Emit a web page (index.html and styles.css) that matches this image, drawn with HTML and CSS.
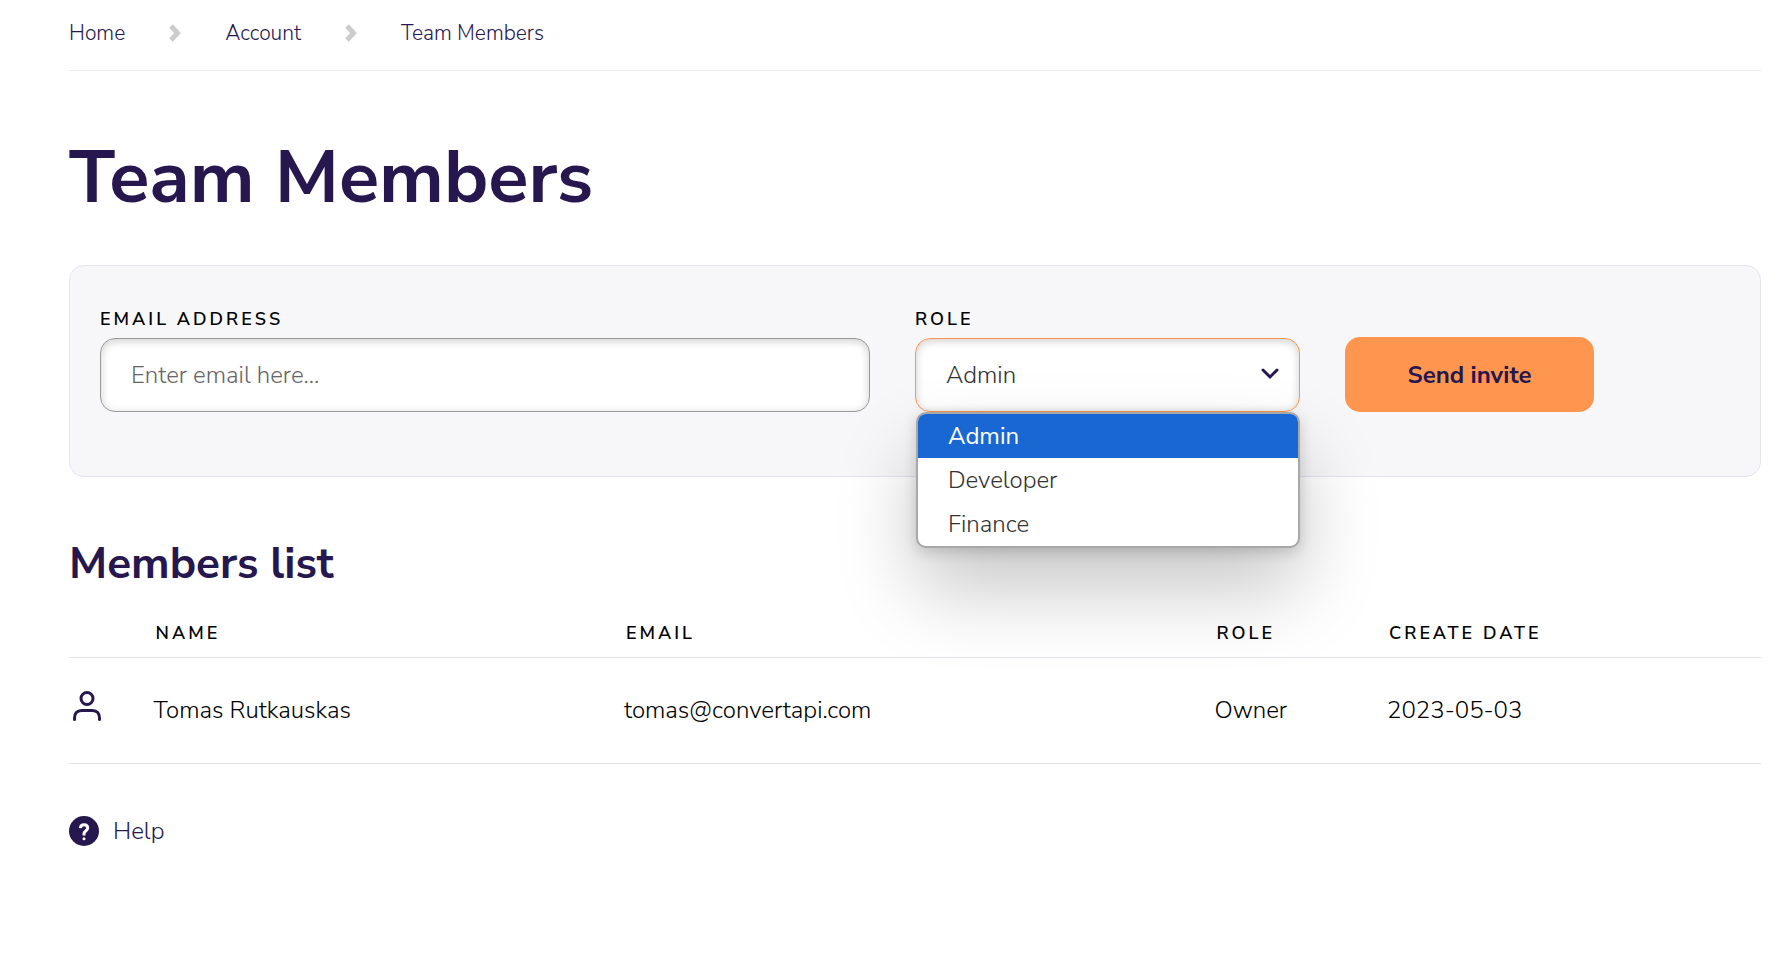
FILE: index.html
```html
<!DOCTYPE html>
<html lang="en">
<head>
  <meta charset="UTF-8">
  <meta name="viewport" content="width=device-width, initial-scale=1.0">
  <title>Team Members</title>
  <link rel="stylesheet" href="styles.css">
</head>
<body>
  <div class="page">
    <nav class="breadcrumb" aria-label="Breadcrumb">
      <a href="#">Home</a>
      <svg class="sep" viewBox="0 0 12 18"><path d="M2 2L8.5 9L2 16"/></svg>
      <a href="#">Account</a>
      <svg class="sep" viewBox="0 0 12 18"><path d="M2 2L8.5 9L2 16"/></svg>
      <a href="#">Team Members</a>
    </nav>

    <h1>Team Members</h1>

    <form class="invite" onsubmit="return false">
      <div class="field">
        <label for="email">Email address</label>
        <input type="email" id="email" placeholder="Enter email here...">
      </div>
      <div class="field">
        <label for="role">Role</label>
        <div class="select">
          <select id="role">
            <option>Admin</option>
            <option>Developer</option>
            <option>Finance</option>
          </select>
          <svg class="arrow" viewBox="0 0 18 12"><path d="M2 2L9 9L16 2"/></svg>
          <ul class="menu" role="listbox" aria-label="Role">
            <li class="active" role="option" aria-selected="true">Admin</li>
            <li role="option">Developer</li>
            <li role="option">Finance</li>
          </ul>
        </div>
      </div>
      <div class="field action">
        <button type="submit">Send invite</button>
      </div>
    </form>

    <h2>Members list</h2>
    <table class="members">
      <thead>
        <tr>
          <th class="col-icon"></th>
          <th class="col-name">Name</th>
          <th class="col-email">Email</th>
          <th class="col-role">Role</th>
          <th>Create date</th>
        </tr>
      </thead>
      <tbody>
        <tr>
          <td>
            <svg class="user" viewBox="0 0 28 30">
              <circle cx="14" cy="7.5" r="6"/>
              <path d="M1.5 28.5V27C1.5 22.5 4 19.5 8.5 19.5H19.5C24 19.5 26.5 22.5 26.5 27V28.5"/>
            </svg>
          </td>
          <td>Tomas Rutkauskas</td>
          <td>tomas@convertapi.com</td>
          <td>Owner</td>
          <td>2023-05-03</td>
        </tr>
      </tbody>
    </table>

    <a class="help" href="#">
      <svg viewBox="0 0 30 30">
        <circle cx="15" cy="15" r="15"/>
        <path d="M11.3 12.2C11.5 9.8 13 8.7 15 8.7C17 8.7 18.7 9.9 18.7 12C18.7 14.8 15 14.8 15 18V19.5"/>
        <circle class="dot" cx="15" cy="22.7" r="1.5"/>
      </svg>
      Help
    </a>
  </div>
</body>
</html>
```

FILE: styles.css
```css
*{box-sizing:border-box}
body {
  margin: 0;
  background: #fff;
  color: #000;
  font-family: "Nunito Sans", Nunito, Lato, sans-serif;
  font-size: 24px;
  line-height: 34px;
  font-weight: 300;
}
.page{
  padding: 0 28px 40px 69px;
}
a{
  color: #27174f;
  text-decoration: none;
}
h1, h2{
  margin: 0;
  color: #27174f;
  font-weight: 700;
}
h1{
  margin: 57px 0 37px;
  font-size: 74px;
  line-height: 100px;
}
h2{
  margin: 57px 0 0;
  font-size: 44px;
  line-height: 60px;
}

.breadcrumb{
  display: flex;
  align-items: center;
  gap: 44px;
  height: 71px;
  padding-bottom: 4px;
  border-bottom: 1px solid #ebebeb;
  font-size: 21px;
}
.sep{
  width: 12px;
  height: 18px;
  fill: none;
  stroke: #ccc;
  stroke-width: 5;
}

.invite{
  display: grid;
  grid-template-columns: 2fr 1fr 1fr;
  gap: 45px;
  height: 212px;
  padding: 38px 30px 0;
  background: #f7f7fa;
  border: 1px solid #e5e4f1;
  border-radius: 15px;
}
label, th{
  font-size: 18px;
  line-height: 30px;
  font-weight: 600;
  letter-spacing: 3px;
  text-transform: uppercase;
}
label{
  display: block;
  margin-bottom: 4px;
}
input, select{
  display: block;
  width: 100%;
  height: 74px;
  padding: 0 30px;
  background: #fff;
  border: 1px solid #999;
  border-radius: 15px;
  box-shadow: inset 0 2px 8px rgba(0,0,0,0.2);
  color: #333;
  font: inherit;
  outline: none;
  appearance: none;
}
input::placeholder{
  color: #666;
}
select{
  border-color: #ff9650;
}
.select{
  position: relative;
}
.arrow{
  position: absolute;
  right: 21px;
  top: 30px;
  width: 18px;
  height: 12px;
  fill: none;
  stroke: #27174f;
  stroke-width: 3;
  stroke-linecap: round;
  pointer-events: none;
}
/* opened list under the select */
.menu{
  position: absolute;
  top: 100%;
  left: 1px;
  right: 0;
  margin: 0;
  padding: 0;
  list-style: none;
  overflow: hidden;
  background: #fff;
  border: 2px solid #a8a8a8;
  border-radius: 10px;
  box-shadow: 0 4px 14px rgba(0,0,0,0.16), 0 42px 80px rgba(0,0,0,0.22);
  color: #333;
}
.menu li{
  height: 44px;
  padding: 0 30px;
  line-height: 44px;
}
.menu .active{
  background: #1967d2;
  color: #fff;
  font-weight: 400;
}
.action{
  padding-top: 33px;
}
button{
  width: 249px;
  height: 75px;
  border: 0;
  border-radius: 15px;
  background: #ff9650;
  color: #27174f;
  font: inherit;
  font-weight: 700;
}

.members{
  width: 100%;
  table-layout: fixed;
  border-collapse: collapse;
}
.members tr{
  border-bottom: 1px solid #e2e1ec;
}
.members th{
  height: 63px;
  padding: 15px 2px 0;
  text-align: left;
}
.members td{
  height: 106px;
  padding: 0;
}
.col-icon{width: 5%}
.col-name{width: 27.8%}
.col-email{width: 34.9%}
.col-role{width: 10.2%}
.user{
  display: block;
  width: 28px;
  height: 30px;
  margin: 0 0 8px 4px;
  fill: none;
  stroke: #27174f;
  stroke-width: 3;
  stroke-linecap: round;
}

.help{
  display: inline-flex;
  align-items: center;
  gap: 14px;
  margin-top: 50px;
}
.help svg{
  width: 30px;
  height: 30px;
  fill: #27174f;
}
.help path{
  fill: none;
  stroke: #fff;
  stroke-width: 3;
}
.help .dot{
  fill: #fff;
}
```
